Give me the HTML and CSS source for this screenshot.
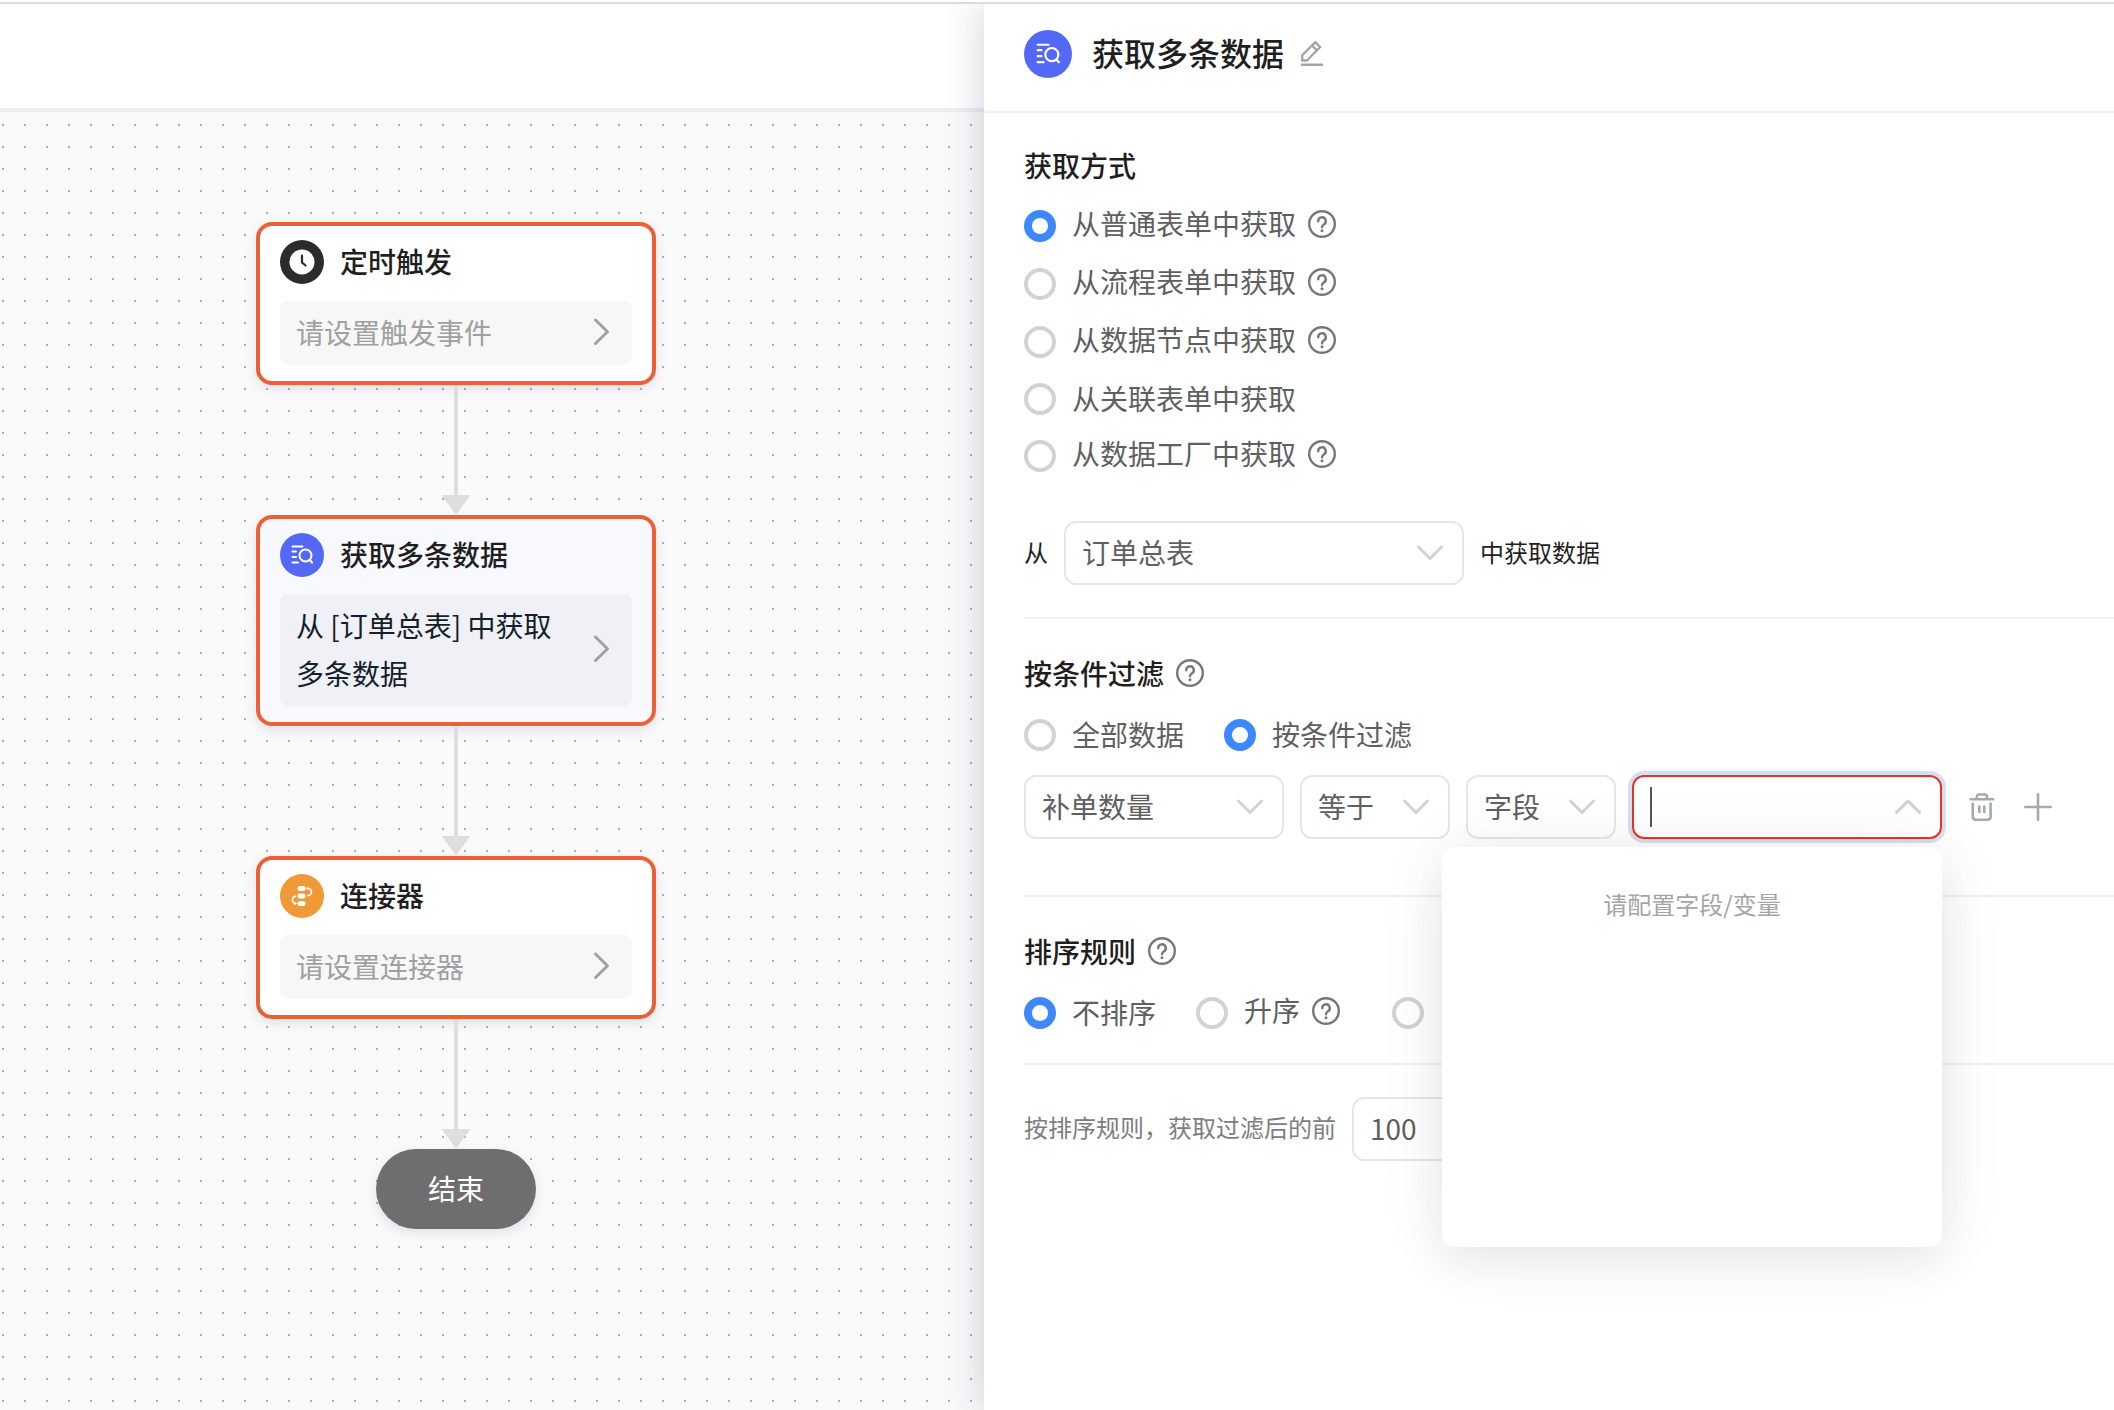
FILE: index.html
```html
<!DOCTYPE html>
<html lang="zh-CN">
<head>
<meta charset="utf-8">
<meta name="viewport" content="width=device-width, initial-scale=1">
<title>获取多条数据</title>
<link rel="stylesheet" href="styles.css">
</head>
<body>
<svg class="sprite" aria-hidden="true">
  <symbol id="i-query" viewBox="0 0 44 44">
    <g fill="none" stroke="#fff" stroke-width="2" stroke-linecap="round">
      <path d="M12.500 13.500H22.500M12.500 18.500H16M12.500 24H16M12.500 29.500H18"/>
      <circle cx="25.500" cy="22.500" r="6"/>
      <path d="M29.800 27L32 29.500"/>
    </g>
  </symbol>
  <symbol id="i-clock" viewBox="0 0 44 44">
    <circle cx="22" cy="22" r="12.500" fill="#fff"/>
    <path d="M22 15.500V22.500L25.500 25.500" fill="none" stroke="#2c2c2c" stroke-width="2.200" stroke-linecap="round" stroke-linejoin="round"/>
  </symbol>
  <symbol id="i-link" viewBox="0 0 44 44">
    <g fill="#fff">
      <rect x="17.500" y="12" width="8" height="5" rx="2.500"/>
      <rect x="17.500" y="19.500" width="8" height="5" rx="2.500"/>
      <rect x="17.500" y="27" width="8" height="5" rx="2.500"/>
    </g>
    <path d="M27.500 14.500H28A3.500 3.500 0 0 1 28 21.500H27M16 29.500H15.500A3.700 3.700 0 0 1 15.500 22.200H16" fill="none" stroke="#fff" stroke-width="1.600"/>
    <path d="M26.500 13L29 14.500L26.500 16ZM14.500 28L17 29.500L14.500 31Z" fill="#fff"/>
  </symbol>
  <symbol id="i-right" viewBox="0 0 16 28">
    <path d="M1.500 2L13.500 13.800L1.500 25.500" fill="none" stroke="#a0a0a0" stroke-width="2.900" stroke-linecap="round" stroke-linejoin="round"/>
  </symbol>
  <symbol id="i-down" viewBox="0 0 26 16">
    <path d="M1.500 2L13 13.500L24.500 2" fill="none" stroke="#d0d2d6" stroke-width="2.900" stroke-linecap="round" stroke-linejoin="round"/>
  </symbol>
  <symbol id="i-up" viewBox="0 0 26 16">
    <path d="M1.500 13.500L13 2L24.500 13.500" fill="none" stroke="#cdcfd3" stroke-width="2.900" stroke-linecap="round" stroke-linejoin="round"/>
  </symbol>
  <symbol id="i-help" viewBox="0 0 28 28">
    <g fill="none" stroke="#757779" stroke-width="2.400" stroke-linecap="round" stroke-linejoin="round">
      <circle cx="14" cy="14" r="12.800"/>
      <path d="M10.200 11.200A3.800 3.800 0 1 1 15.800 14.400C14.500 15.200 14 15.900 14 17.200"/>
    </g>
    <circle cx="14" cy="20.800" r="1.500" fill="#757779"/>
  </symbol>
  <symbol id="i-edit" viewBox="0 0 24 28">
    <g fill="none" stroke="#a3a3a3" stroke-width="2.300" stroke-linejoin="round" stroke-linecap="round">
      <path d="M2.200 20.500V15.200L15.200 2.200L20.200 7L7 20.500Z"/>
      <path d="M12 5.500L16.800 10.200"/>
      <path d="M2 24.700H22" stroke-width="2.600"/>
    </g>
  </symbol>
  <symbol id="i-trash" viewBox="0 0 26 28">
    <g fill="none" stroke="#a6a9ad" stroke-width="2.600" stroke-linecap="round" stroke-linejoin="round">
      <path d="M1.500 6.200H24.200M7.800 6V4Q8 1.500 10 1.500H15.700Q18 1.500 18 4V6"/>
      <path d="M3.800 10.500V23.500Q3.800 26.800 7.200 26.800H18.200Q21.600 26.800 21.600 23.500V10.500"/>
      <path d="M10.300 13.500V19M15.300 13.500V19"/>
    </g>
  </symbol>
  <symbol id="i-plus" viewBox="0 0 28 28">
    <path d="M14 1.300V26.700M1.300 14H26.700" fill="none" stroke="#a6a9ad" stroke-width="2.600" stroke-linecap="round"/>
  </symbol>
  <symbol id="i-arrow" viewBox="0 0 28 20">
    <path d="M1 0H27Q28.300 .3 27.400 1.500L14.800 18.600Q14 19.400 13.200 18.600L.6 1.500Q-.3 .3 1 0Z" fill="#dedede"/>
  </symbol>
</svg>

<div class="app">
  <main class="flow">
    <div class="toolbar"></div>
    <div class="canvas">
      <section class="node">
        <header class="node-head">
          <span class="badge badge-dark"><svg><use href="#i-clock"/></svg></span>
          <h2>定时触发</h2>
        </header>
        <button type="button" class="node-body"><span>请设置触发事件</span><svg class="chev-right"><use href="#i-right"/></svg></button>
      </section>
      <div class="connector"><svg><use href="#i-arrow"/></svg></div>
      <section class="node node-active">
        <header class="node-head">
          <span class="badge badge-blue"><svg><use href="#i-query"/></svg></span>
          <h2>获取多条数据</h2>
        </header>
        <button type="button" class="node-body"><span>从 [订单总表] 中获取多条数据</span><svg class="chev-right"><use href="#i-right"/></svg></button>
      </section>
      <div class="connector"><svg><use href="#i-arrow"/></svg></div>
      <section class="node">
        <header class="node-head">
          <span class="badge badge-orange"><svg><use href="#i-link"/></svg></span>
          <h2>连接器</h2>
        </header>
        <button type="button" class="node-body"><span>请设置连接器</span><svg class="chev-right"><use href="#i-right"/></svg></button>
      </section>
      <div class="connector"><svg><use href="#i-arrow"/></svg></div>
      <div class="end">结束</div>
    </div>
  </main>

  <aside class="drawer">
    <header class="drawer-head">
      <span class="badge badge-blue badge-large"><svg><use href="#i-query"/></svg></span>
      <h1>获取多条数据</h1>
      <button type="button" class="icon-btn edit" aria-label="编辑名称"><svg><use href="#i-edit"/></svg></button>
    </header>
    <form class="drawer-body">
      <section class="block">
        <h3>获取方式</h3>
        <div class="options-column">
          <label class="option has-help"><input type="radio" name="source" checked><span>从普通表单中获取</span><svg class="help"><use href="#i-help"/></svg></label>
          <label class="option has-help"><input type="radio" name="source"><span>从流程表单中获取</span><svg class="help"><use href="#i-help"/></svg></label>
          <label class="option has-help"><input type="radio" name="source"><span>从数据节点中获取</span><svg class="help"><use href="#i-help"/></svg></label>
          <label class="option"><input type="radio" name="source"><span>从关联表单中获取</span></label>
          <label class="option has-help"><input type="radio" name="source"><span>从数据工厂中获取</span><svg class="help"><use href="#i-help"/></svg></label>
        </div>
        <div class="from-row">
          <label for="form">从</label>
          <span class="select select-form"><select id="form"><option>订单总表</option></select><svg class="chev"><use href="#i-down"/></svg></span>
          <span>中获取数据</span>
        </div>
      </section>

      <section class="block">
        <h3>按条件过滤<svg class="help"><use href="#i-help"/></svg></h3>
        <div class="options-row">
          <label class="option"><input type="radio" name="filter"><span>全部数据</span></label>
          <label class="option"><input type="radio" name="filter" checked><span>按条件过滤</span></label>
        </div>
        <div class="filter-row">
          <span class="select select-field"><select aria-label="过滤字段"><option>补单数量</option></select><svg class="chev"><use href="#i-down"/></svg></span>
          <span class="select select-short"><select aria-label="比较方式"><option>等于</option></select><svg class="chev"><use href="#i-down"/></svg></span>
          <span class="select select-short"><select aria-label="值类型"><option>字段</option></select><svg class="chev"><use href="#i-down"/></svg></span>
          <div class="combo">
            <span class="caret"></span>
            <input type="text" aria-label="字段或变量">
            <svg class="chev"><use href="#i-up"/></svg>
            <div class="popup">请配置字段/变量</div>
          </div>
          <button type="button" class="icon-btn trash" aria-label="删除条件"><svg><use href="#i-trash"/></svg></button>
          <button type="button" class="icon-btn plus" aria-label="添加条件"><svg><use href="#i-plus"/></svg></button>
        </div>
      </section>

      <section class="block block-sort">
        <h3>排序规则<svg class="help"><use href="#i-help"/></svg></h3>
        <div class="options-row">
          <label class="option"><input type="radio" name="sort" checked><span>不排序</span></label>
          <label class="option has-help"><input type="radio" name="sort"><span>升序</span><svg class="help"><use href="#i-help"/></svg></label>
          <label class="option"><input type="radio" name="sort" aria-label="降序"></label>
        </div>
      </section>

      <section class="limit">
        <label for="limit">按排序规则，获取过滤后的前</label>
        <input id="limit" class="limit-input" type="text" value="100">
      </section>
    </form>
  </aside>
</div>
</body>
</html>
```
FILE: styles.css
```css
* {
  box-sizing: border-box;
}

body {
  margin: 0;
  padding-top: 2px;
  background: #fff;
  color: #1f1f1f;
  font-family: "Noto Sans CJK SC", sans-serif;
  font-size: 28px;
}

h1,
h2,
h3 {
  margin: 0;
  font-weight: 500;
}

button,
input,
select {
  margin: 0;
  padding: 0;
  border: 0;
  background: none;
  color: inherit;
  font: inherit;
}

svg {
  display: block;
  flex: none;
}

.sprite {
  position: absolute;
  width: 0;
  height: 0;
}

.app {
  display: grid;
  grid-template-columns: 984fr 1130fr;
  min-height: calc(100vh - 2px);
  border-top: 2px solid #dcdcde;
  overflow: hidden;
}

/* Flow canvas */

.flow {
  display: flex;
  flex-direction: column;
  min-width: 0;
}

.toolbar {
  height: 108px;
  border-bottom: 4px solid #eceff2;
}

.canvas {
  flex: 1;
  display: flex;
  flex-direction: column;
  align-items: center;
  padding: 110px 72px 80px 0;
  background-color: #fafafa;
  background-image: conic-gradient(from 90deg at 20px 20px, #a7aebd 90deg, transparent 0);
  background-size: 22px 22px;
  background-position: 4px 14px;
}

.node {
  width: 400px;
  padding: 14px 20px 16px;
  border: 4px solid #ed6035;
  border-radius: 16px;
  background: #fff;
  box-shadow: 0 4px 12px rgba(30, 50, 80, .12);
}

.node-active {
  background: #f8f9ff;
}

.node-head {
  display: flex;
  align-items: center;
  gap: 16px;
  margin-bottom: 17px;
}

.node-head h2 {
  padding-bottom: 2px;
  font-size: 28px;
  line-height: 42px;
}

.badge {
  width: 44px;
  height: 44px;
  border-radius: 50%;
}

.badge svg {
  width: 100%;
  height: 100%;
}

.badge-large {
  width: 48px;
  height: 48px;
}

.badge-dark {
  background: #2c2c2c;
}

.badge-blue {
  background: #5369f5;
}

.badge-orange {
  background: #f09a37;
}

.node-body {
  display: flex;
  align-items: center;
  gap: 16px;
  width: 100%;
  padding: 7px 22px 9px 16px;
  border-radius: 8px;
  background: #f7f7f7;
  color: #a0a0a0;
  line-height: 48px;
  text-align: left;
}

.node-body span {
  flex: 1;
}

.node-active .node-body {
  background: #eff1f6;
  color: #141e2d;
}

.chev-right {
  width: 16px;
  height: 28px;
}

.connector {
  display: flex;
  flex-direction: column;
  align-items: center;
  height: 130px;
}

.connector::before {
  content: "";
  flex: 1;
  width: 4px;
  background: #dedede;
}

.connector svg {
  width: 28px;
  height: 20px;
}

.end {
  width: 160px;
  padding-bottom: 2px;
  border-radius: 40px;
  background: #6e6e6e;
  color: #fff;
  line-height: 78px;
  text-align: center;
  box-shadow: 0 4px 12px rgba(30, 50, 80, .12);
}

/* Settings drawer */

.drawer {
  position: relative;
  min-width: 0;
  border-top-left-radius: 4px;
  background: #fff;
  box-shadow: 0 0 40px rgba(30, 40, 80, .22);
}

.drawer-head {
  display: flex;
  align-items: center;
  height: 109px;
  padding: 0 40px 8px;
  border-bottom: 2px solid #f0f1f2;
}

.drawer-head h1 {
  margin-left: 20px;
  padding-bottom: 4px;
  font-size: 32px;
  line-height: 44px;
}

.icon-btn svg {
  width: 28px;
  height: 28px;
}

.icon-btn.edit {
  margin-left: 16px;
}

.icon-btn.edit svg {
  width: 24px;
}

.drawer-body {
  padding: 32px 0 32px 40px;
}

.block {
  padding-bottom: 32px;
  border-bottom: 2px solid #f0f1f2;
  margin-bottom: 34px;
}

.block-sort {
  padding-bottom: 34px;
  margin-bottom: 32px;
}

.block h3 {
  display: flex;
  align-items: center;
  gap: 12px;
  font-size: 28px;
  line-height: 40px;
}

.help {
  width: 28px;
  height: 28px;
}

.options-column {
  display: flex;
  flex-direction: column;
  align-items: flex-start;
  gap: 24px;
  margin-top: 24px;
}

.options-row {
  display: flex;
  gap: 40px;
  margin-top: 26px;
}

.option {
  display: flex;
  align-items: center;
  color: #5e5f61;
}

.option span {
  padding-bottom: 2px;
  line-height: 30px;
}

.option input {
  appearance: none;
  flex: none;
  width: 32px;
  height: 32px;
  margin-right: 16px;
  border: 4px solid #d0d2d6;
  border-radius: 50%;
}

.option input:checked {
  border: 8px solid #3d88fa;
}

.option .help {
  margin: 0 12px 4px;
}

.options-column .has-help {
  height: 34px;
}

.has-help span {
  padding-bottom: 6px;
  line-height: 26px;
}

.from-row {
  display: flex;
  align-items: center;
  gap: 16px;
  margin-top: 48px;
  font-size: 24px;
}

.from-row > label,
.from-row > span:last-child {
  padding-bottom: 4px;
}

.select {
  position: relative;
  display: flex;
  align-items: center;
}

.select select {
  appearance: none;
  width: 100%;
  height: 64px;
  padding: 0 16px 2px;
  border: 2px solid #e6e6e6;
  border-radius: 12px;
  color: #5e5f61;
  font-size: 28px;
}

.chev {
  position: absolute;
  right: 21px;
  top: 24px;
  width: 26px;
  height: 16px;
  pointer-events: none;
}

.select-form {
  width: 400px;
}

.select-field {
  width: 260px;
}

.select-short {
  width: 150px;
}

.filter-row {
  display: flex;
  align-items: center;
  gap: 16px;
  margin-top: 24px;
  margin-bottom: 24px;
}

.combo {
  position: relative;
  display: flex;
  align-items: center;
  width: 310px;
  height: 64px;
  padding: 0 16px;
  border: 2px solid #e93323;
  border-radius: 12px;
  box-shadow: 0 0 0 4px #d3dff3;
}

.combo input {
  width: 220px;
  outline: 0;
}

.combo .chev {
  right: 19px;
  top: 22px;
}

.caret {
  width: 2px;
  height: 40px;
  background: #555;
}

.popup {
  position: absolute;
  z-index: 1;
  top: calc(100% + 10px);
  right: -2px;
  width: 500px;
  height: 400px;
  padding-top: 39px;
  border-radius: 12px;
  background: #fff;
  color: #a5a5a5;
  font-size: 24px;
  line-height: 36px;
  text-align: center;
  box-shadow: 0 12px 48px rgba(0, 0, 0, .08), 0 4px 80px rgba(0, 0, 0, .05);
}

.icon-btn.trash {
  margin-left: 11px;
}

.icon-btn.trash svg {
  width: 26px;
}

.icon-btn.plus {
  margin-left: 13px;
}

.limit {
  display: flex;
  align-items: center;
  gap: 16px;
  color: #7d7e80;
  font-size: 24px;
}

.limit label {
  padding-bottom: 6px;
}

.limit-input {
  width: 180px;
  height: 64px;
  padding: 0 16px 2px;
  border: 2px solid #e6e6e6;
  border-radius: 12px;
  color: #5e5f61;
  font-size: 28px;
}
```
